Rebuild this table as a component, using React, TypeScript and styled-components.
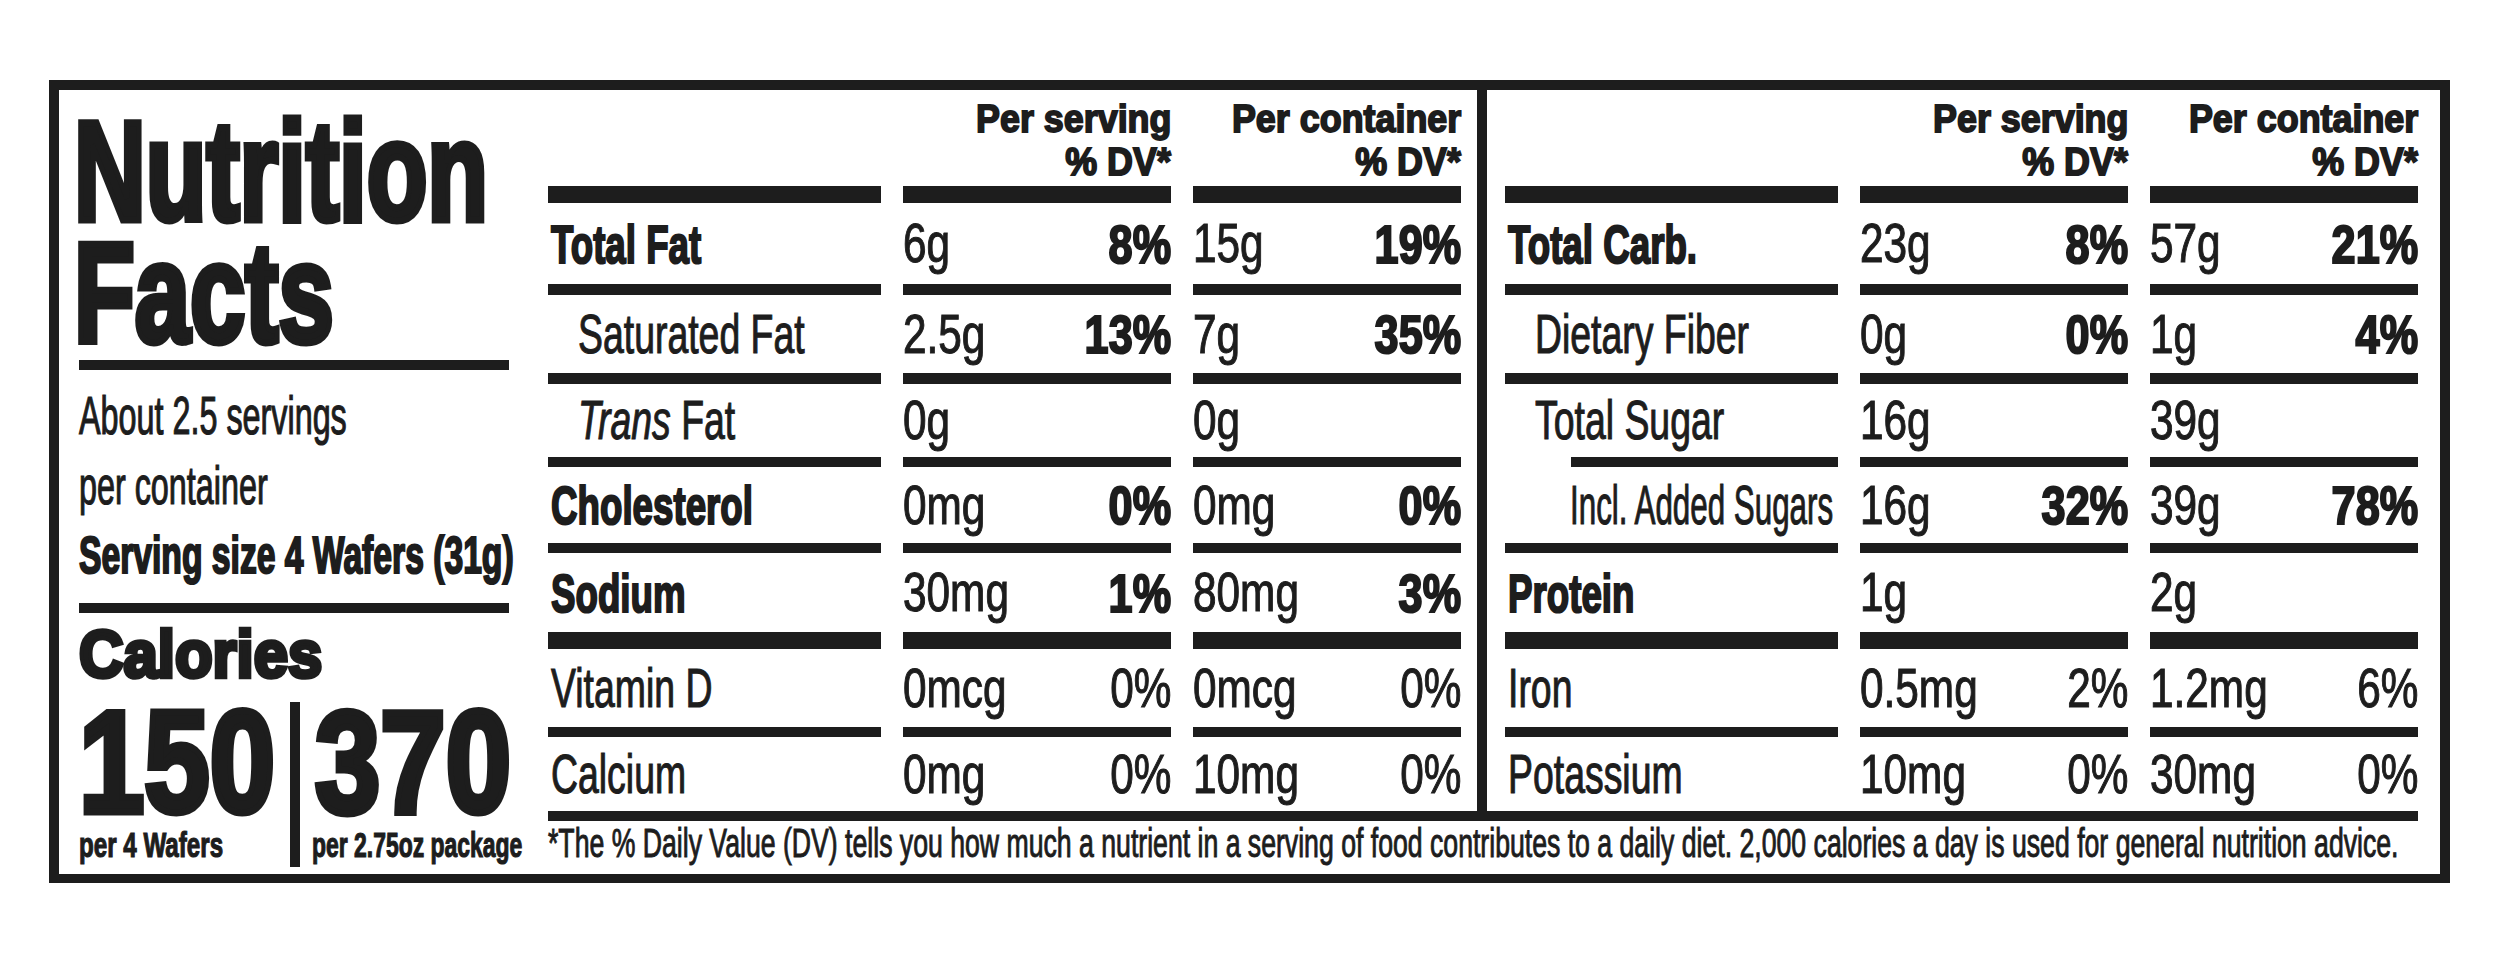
import React from 'react';
import styled, { createGlobalStyle } from 'styled-components';

const INK = '#1d1d1d';

const Global = createGlobalStyle`
  html, body { margin: 0; padding: 0; background: #ffffff; overflow: hidden; }
  body { font-family: 'Liberation Sans', Arial, sans-serif; color: ${INK}; }
`;

const Page = styled.div`
  width: 2500px;
  height: 965px;
  box-sizing: border-box;
  padding: 80px 0 0 49px;
  background: #ffffff;
`;

const LabelBox = styled.div`
  width: 2401px;
  height: 803px;
  box-sizing: border-box;
  border: 10px solid ${INK};
  border-bottom-width: 9px;
  display: flex;
`;

/* ---------- left panel ---------- */

const Panel = styled.div`
  width: 489px;
  flex: none;
  box-sizing: border-box;
  padding: 20px 0 0 20px;
  display: flex;
  flex-direction: column;
`;

const TitleLine = styled.span`
  display: block;
  width: max-content;
  margin-left: -5px;
  font-size: 141px;
  line-height: 122px;
  font-weight: 700;
  white-space: nowrap;
  -webkit-text-stroke: 7px ${INK};
  transform: scaleX(0.705);
  transform-origin: left center;
`;

const Rule = styled.div<{ $top: number }>`
  width: 430px;
  height: 10px;
  margin-top: ${p => p.$top}px;
  background: ${INK};
`;

const InfoBlock = styled.div`
  margin-top: 11px;
  display: flex;
  flex-direction: column;
`;

const InfoLine = styled.span<{ $bold?: boolean; $sx: number }>`
  display: block;
  width: max-content;
  font-size: ${p => (p.$bold ? 51 : 53)}px;
  line-height: 70px;
  font-weight: ${p => (p.$bold ? 700 : 400)};
  white-space: nowrap;
  -webkit-text-stroke: ${p => (p.$bold ? 2.2 : 1.2)}px ${INK};
  transform: scaleX(${p => p.$sx});
  transform-origin: left center;
`;

const CaloriesTitle = styled.span`
  display: block;
  width: max-content;
  margin-top: 7px;
  font-size: 67px;
  line-height: 68px;
  font-weight: 700;
  white-space: nowrap;
  -webkit-text-stroke: 4.5px ${INK};
  transform: scaleX(0.92);
  transform-origin: left center;
`;

const CalRow = styled.div`
  display: flex;
  margin-top: 14px;
`;

const CalCol = styled.div<{ $w?: number; $pl?: number }>`
  display: flex;
  flex-direction: column;
  flex: none;
  width: ${p => (p.$w ? `${p.$w}px` : 'auto')};
  padding-left: ${p => p.$pl ?? 0}px;
`;

const CalNum = styled.span<{ $ml?: number }>`
  display: block;
  width: max-content;
  margin-left: ${p => p.$ml ?? 0}px;
  font-size: 145px;
  line-height: 120px;
  font-weight: 700;
  white-space: nowrap;
  -webkit-text-stroke: 7px ${INK};
  transform: scaleX(0.81);
  transform-origin: left center;
`;

const CalSub = styled.span<{ $sx: number }>`
  display: block;
  width: max-content;
  margin: 5px 0 4px;
  font-size: 35px;
  line-height: 36px;
  font-weight: 700;
  white-space: nowrap;
  -webkit-text-stroke: 1.2px ${INK};
  transform: scaleX(${p => p.$sx});
  transform-origin: left center;
`;

const CalDivider = styled.div`
  width: 10px;
  flex: none;
  background: ${INK};
`;

/* ---------- table ---------- */

const TableArea = styled.div`
  flex: 1;
  display: flex;
  flex-direction: column;
  padding-right: 22px;
  min-width: 0;
`;

const Columns = styled.div`
  display: flex;
`;

const Group = styled.div`
  display: grid;
  grid-template-columns: 333px 268px 268px;
  column-gap: 22px;
  align-content: start;
`;

const MidDivider = styled.div`
  width: 10px;
  flex: none;
  margin: 0 18px 0 16px;
  background: ${INK};
`;

const HeaderCell = styled.div`
  height: 96px;
  box-sizing: border-box;
  padding-bottom: 3px;
  display: flex;
  flex-direction: column;
  justify-content: flex-end;
  align-items: flex-end;
`;

const HeaderLine = styled.span`
  display: block;
  font-size: 39px;
  line-height: 43px;
  font-weight: 700;
  white-space: nowrap;
  -webkit-text-stroke: 1.8px ${INK};
  transform: scaleX(0.92);
  transform-origin: right center;
`;

const Cell = styled.div`
  display: flex;
  flex-direction: column;
`;

const Bar = styled.div<{ $h: number; $indent?: number }>`
  height: ${p => p.$h}px;
  margin-left: ${p => p.$indent ?? 0}px;
  background: ${INK};
`;

const CellBody = styled.div<{ $h: number; $indent?: number }>`
  height: ${p => p.$h}px;
  box-sizing: border-box;
  padding-left: ${p => p.$indent ?? 0}px;
  display: flex;
  align-items: center;
  justify-content: space-between;
`;

const TableText = styled.span<{ $bold?: boolean; $sx?: number; $right?: boolean }>`
  display: inline-block;
  white-space: nowrap;
  line-height: 1;
  font-size: ${p => (p.$bold ? 54 : 55)}px;
  font-weight: ${p => (p.$bold ? 700 : 400)};
  -webkit-text-stroke: ${p => (p.$bold ? 2.2 : 1.1)}px ${INK};
  transform: scaleX(${p => p.$sx ?? (p.$bold ? 0.68 : 0.68)});
  transform-origin: ${p => (p.$right ? 'right' : 'left')} center;
`;

const Italic = styled.i`
  font-style: italic;
`;

const FootBar = styled.div`
  height: 10px;
  background: ${INK};
`;

const FootText = styled.p`
  margin: 0;
  padding-top: 2px;
  width: max-content;
  font-size: 40px;
  line-height: 40px;
  white-space: nowrap;
  -webkit-text-stroke: 1px ${INK};
  transform: scaleX(0.666);
  transform-origin: left center;
`;

/* ---------- data ---------- */

type Metric = { bar: number; h: number };

const METRICS: Metric[] = [
  { bar: 17, h: 81 },
  { bar: 11, h: 78 },
  { bar: 11, h: 73 },
  { bar: 10, h: 76 },
  { bar: 10, h: 79 },
  { bar: 17, h: 78 },
  { bar: 10, h: 74 },
];

type Nutrient = {
  name: React.ReactNode;
  bold?: boolean;
  indent?: number;
  barIndent?: number;
  nameSx?: number;
  pctBold?: boolean;
  serving: [string, string?];
  container: [string, string?];
};

const LEFT: Nutrient[] = [
  { name: 'Total Fat', bold: true, pctBold: true, serving: ['6g', '8%'], container: ['15g', '19%'] },
  { name: 'Saturated Fat', indent: 30, pctBold: true, serving: ['2.5g', '13%'], container: ['7g', '35%'] },
  { name: <><Italic>Trans</Italic> Fat</>, indent: 30, serving: ['0g'], container: ['0g'] },
  { name: 'Cholesterol', bold: true, pctBold: true, serving: ['0mg', '0%'], container: ['0mg', '0%'] },
  { name: 'Sodium', bold: true, pctBold: true, serving: ['30mg', '1%'], container: ['80mg', '3%'] },
  { name: 'Vitamin D', serving: ['0mcg', '0%'], container: ['0mcg', '0%'] },
  { name: 'Calcium', serving: ['0mg', '0%'], container: ['10mg', '0%'] },
];

const RIGHT: Nutrient[] = [
  { name: 'Total Carb.', bold: true, pctBold: true, serving: ['23g', '8%'], container: ['57g', '21%'] },
  { name: 'Dietary Fiber', indent: 30, pctBold: true, serving: ['0g', '0%'], container: ['1g', '4%'] },
  { name: 'Total Sugar', indent: 30, serving: ['16g'], container: ['39g'] },
  {
    name: 'Incl. Added Sugars',
    indent: 65,
    barIndent: 66,
    nameSx: 0.57,
    pctBold: true,
    serving: ['16g', '32%'],
    container: ['39g', '78%'],
  },
  { name: 'Protein', bold: true, serving: ['1g'], container: ['2g'] },
  { name: 'Iron', serving: ['0.5mg', '2%'], container: ['1.2mg', '6%'] },
  { name: 'Potassium', serving: ['10mg', '0%'], container: ['30mg', '0%'] },
];

function NutrientCells({ n, m }: { n: Nutrient; m: Metric }) {
  return (
    <>
      <Cell>
        <Bar $h={m.bar} $indent={n.barIndent} />
        <CellBody $h={m.h} $indent={n.indent ?? 3}>
          <TableText $bold={n.bold} $sx={n.nameSx}>
            {n.name}
          </TableText>
        </CellBody>
      </Cell>
      {[n.serving, n.container].map((v, i) => (
        <Cell key={i}>
          <Bar $h={m.bar} />
          <CellBody $h={m.h}>
            <TableText $sx={0.77}>{v[0]}</TableText>
            {v[1] && (
              <TableText $bold={n.pctBold} $sx={n.pctBold ? 0.8 : 0.77} $right>
                {v[1]}
              </TableText>
            )}
          </CellBody>
        </Cell>
      ))}
    </>
  );
}

function NutrientGroup({ rows }: { rows: Nutrient[] }) {
  return (
    <Group>
      <HeaderCell />
      <HeaderCell>
        <HeaderLine>Per serving</HeaderLine>
        <HeaderLine>% DV*</HeaderLine>
      </HeaderCell>
      <HeaderCell>
        <HeaderLine>Per container</HeaderLine>
        <HeaderLine>% DV*</HeaderLine>
      </HeaderCell>
      {rows.map((n, i) => (
        <NutrientCells key={i} n={n} m={METRICS[i]} />
      ))}
    </Group>
  );
}

export default function App() {
  return (
    <Page>
      <Global />
      <LabelBox>
        <Panel>
          <TitleLine>Nutrition</TitleLine>
          <TitleLine>Facts</TitleLine>
          <Rule $top={6} />
          <InfoBlock>
            <InfoLine $sx={0.61}>About 2.5 servings</InfoLine>
            <InfoLine $sx={0.61}>per container</InfoLine>
            <InfoLine $bold $sx={0.66}>Serving size 4 Wafers (31g)</InfoLine>
          </InfoBlock>
          <Rule $top={12} />
          <CaloriesTitle>Calories</CaloriesTitle>
          <CalRow>
            <CalCol $w={211}>
              <CalNum>150</CalNum>
              <CalSub $sx={0.69}>per 4 Wafers</CalSub>
            </CalCol>
            <CalDivider />
            <CalCol $pl={12}>
              <CalNum $ml={3}>370</CalNum>
              <CalSub $sx={0.655}>per 2.75oz package</CalSub>
            </CalCol>
          </CalRow>
        </Panel>
        <TableArea>
          <Columns>
            <NutrientGroup rows={LEFT} />
            <MidDivider />
            <NutrientGroup rows={RIGHT} />
          </Columns>
          <FootBar />
          <FootText>
            *The % Daily Value (DV) tells you how much a nutrient in a serving of food contributes to a daily
            diet. 2,000 calories a day is used for general nutrition advice.
          </FootText>
        </TableArea>
      </LabelBox>
    </Page>
  );
}
